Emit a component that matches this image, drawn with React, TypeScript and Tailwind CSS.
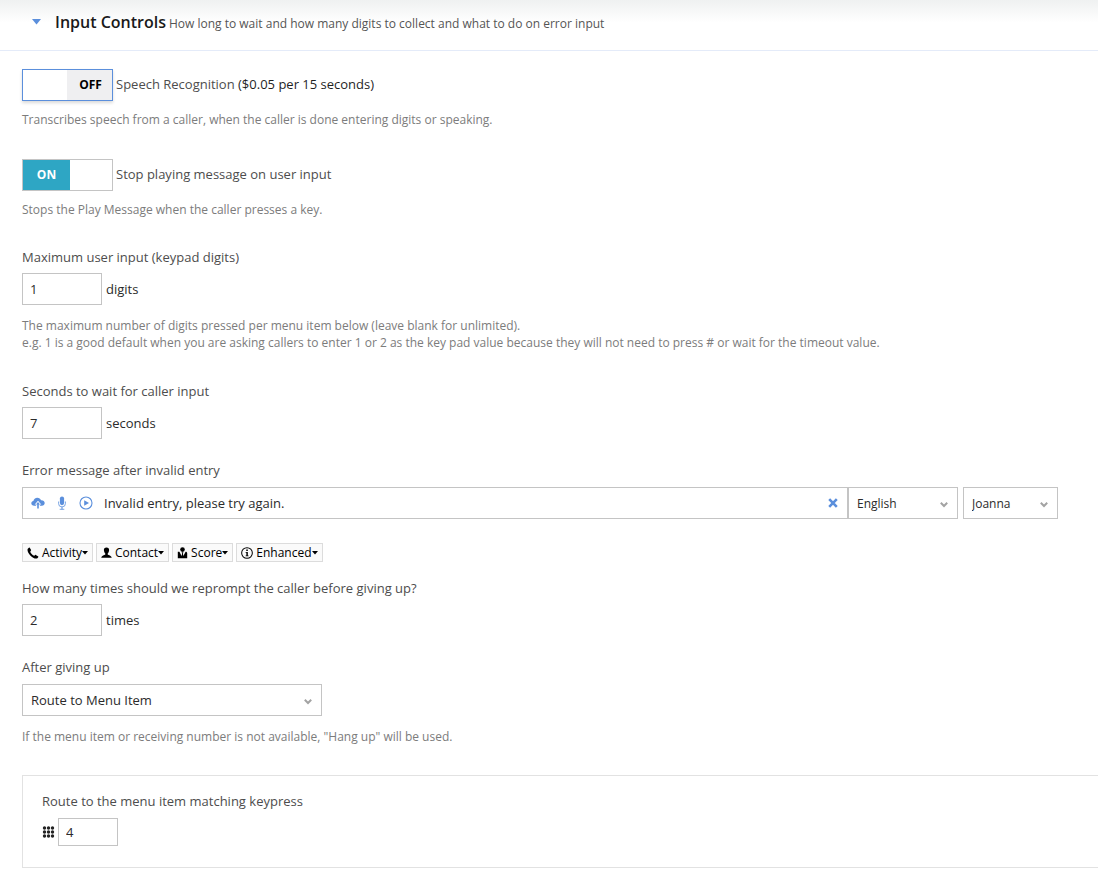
import { useState } from 'react';
import type { ReactNode } from 'react';

function HelpText({ className = 'mt-3', children }: { className?: string; children: ReactNode }) {
  return <p className={`text-[12px] leading-[17px] text-[#7c7c7c] ${className}`}>{children}</p>;
}

function Toggle({ id, defaultOn = false, children }: { id: string; defaultOn?: boolean; children: ReactNode }) {
  const [on, setOn] = useState(defaultOn);

  return (
    <div className="flex items-center gap-[3px]">
      <button
        id={id}
        type="button"
        role="switch"
        aria-checked={on}
        onClick={() => setOn(!on)}
        className={
          on
            ? 'flex h-8 w-[91px] border border-[#c4c4c4] bg-white text-[12px] font-bold'
            : 'flex h-8 w-[91px] justify-end border border-[#5b8fdc] bg-white text-[12px] font-bold shadow-[0_2px_3px_rgba(0,0,0,0.15)]'
        }
      >
        {on ? (
          <span className="flex h-full w-[47px] items-center justify-center bg-[#2ea6c4] text-white">ON</span>
        ) : (
          <span className="flex h-full w-[45px] items-center justify-center bg-[#efeff1] pl-[2px] text-black">OFF</span>
        )}
      </button>
      <label htmlFor={id} className="pb-[2px] leading-[18px] text-[#4d4d4d]">
        {children}
      </label>
    </div>
  );
}

function NumberField({ id, label, value, unit }: { id: string; label: string; value: string; unit: string }) {
  return (
    <div>
      <label htmlFor={id} className="block leading-[18px] text-[#4d4d4d]">
        {label}
      </label>
      <div className="mt-[7px] flex items-center gap-1">
        <input id={id} type="text" defaultValue={value} className="h-8 w-20 border border-[#c4c4c4] bg-white px-[7px] text-[#2b2b2b]" />
        <span className="leading-[18px] text-[#2b2b2b]">{unit}</span>
      </div>
    </div>
  );
}

function Select({ id, label, options, className, textClassName = '' }: { id: string; label?: string; options: string[]; className: string; textClassName?: string }) {
  return (
    <div className={`relative ${className}`}>
      <select
        id={id}
        aria-label={label}
        className={`h-8 w-full appearance-none border border-[#c4c4c4] bg-white pl-2 pr-6 pt-[2px] text-[#2b2b2b] ${textClassName}`}
      >
        {options.map((option) => (
          <option key={option}>{option}</option>
        ))}
      </select>
      <svg viewBox="0 0 8 6" className="pointer-events-none absolute right-[10px] top-[15px] h-[6px] w-[8px]" fill="none" stroke="#a3a3a3" strokeWidth="2">
        <path d="M0.8 0.8 4 4 7.2 0.8" />
      </svg>
    </div>
  );
}

function UploadIcon() {
  return (
    <svg viewBox="0 0 14 12" className="h-[12px] w-[14px]">
      <path
        fill="#5b8fdc"
        d="M3.2 8.8C1.4 8.8 0.3 7.7 0.3 6.3 0.3 5 1.2 4.1 2.4 3.9 2.7 2 4.3 0.7 6.3 0.7 8.1 0.7 9.5 1.7 10 3.2 12.1 3 13.7 4.3 13.7 6.1 13.7 7.7 12.5 8.8 10.9 8.8Z"
      />
      <path fill="#fff" d="M7 3.7 10.3 7.6H8.9V9H5.1V7.6H3.7Z" />
      <path fill="#5b8fdc" d="M7 5 9 7.4H7.8V11.4H6.2V7.4H5Z" />
    </svg>
  );
}

function MicIcon() {
  return (
    <svg viewBox="0 0 8 14" className="h-[14px] w-[8px]" fill="none" stroke="#5b8fdc">
      <rect x="1.9" y="0.5" width="4.2" height="8.7" rx="2.1" fill="#5b8fdc" stroke="none" />
      <path strokeWidth="0.8" d="M0.6 5.5v2.2a3.4 3.2 0 0 0 6.8 0V5.5M1.7 13.3h4.6" />
      <path d="M4 11v2.4" />
    </svg>
  );
}

function PlayIcon() {
  return (
    <svg viewBox="0 0 14 14" className="h-[14px] w-[14px]">
      <circle cx="7" cy="7" r="6" fill="none" stroke="#5b8fdc" strokeWidth="1.1" />
      <path d="M5.2 4.2 10 7 5.2 9.8Z" fill="#5b8fdc" />
    </svg>
  );
}

const tokens = [
  {
    label: 'Activity',
    icon: (
      <svg viewBox="0 0 12 12" className="h-[12px] w-[12px]">
        <path d="M2.6 0.5 4.1 3.1C4.3 3.5 3.4 4.3 3.3 4.7 3.3 5.8 6 8.6 7.2 8.7 7.7 8.6 8.4 7.7 8.8 7.9L11.3 9.4C11.7 9.8 10.7 11.2 9.7 11.5 5.9 12 0.2 6.2 0.5 2.4 0.8 1.3 2.2 0.1 2.6 0.5Z" />
      </svg>
    ),
  },
  {
    label: 'Contact',
    icon: (
      <svg viewBox="0 0 11 12" className="h-[12px] w-[11px]">
        <path d="M5.5 0.6C7.3 0.6 8.2 1.7 8.1 3.3 8 4.9 7.3 6 6.7 6.6V7.6C7.5 8.4 10.5 8.6 10.7 10.8H0.3C0.5 8.6 3.5 8.4 4.3 7.6V6.6C3.7 6 3 4.9 2.9 3.3 2.8 1.7 3.7 0.6 5.5 0.6Z" />
      </svg>
    ),
  },
  {
    label: 'Score',
    icon: (
      <svg viewBox="0 0 11 12" className="h-[12px] w-[11px]">
        <circle cx="5.5" cy="2.6" r="2.3" />
        <path d="M0.8 4.8H2.4L4.6 8.9 5.1 6.6 4.6 5.3H6.4L5.9 6.6 6.4 8.9 8.6 4.8C9.7 4.8 10.2 5.4 10.2 6.3V11.2H0.8Z" />
      </svg>
    ),
  },
  {
    label: 'Enhanced',
    icon: (
      <svg viewBox="0 0 13 13" className="h-[12px] w-[12px]">
        <circle cx="6.5" cy="6.5" r="5.8" fill="none" stroke="#000" strokeWidth="1.1" />
        <path d="M5.7 2.7h1.7v1.6H5.7zM5 5.3h2.4v3.9h0.8v0.9H5v-0.9h0.8V6.2H5z" />
      </svg>
    ),
  },
];

export default function App() {
  const [message, setMessage] = useState('Invalid entry, please try again.');

  return (
    <main className="min-h-screen bg-white pb-[10px] font-['Open_Sans',sans-serif] text-[13px] text-[#2b2b2b]">
      <header className="flex h-[51px] items-center border-b border-[#e4ebf9] bg-linear-to-b from-[#eff1f1] to-white to-45% pb-[6px] pl-8">
        <button type="button" aria-label="Collapse Input Controls" className="mr-[14px]">
          <svg viewBox="0 0 9 6" className="h-[6px] w-[9px]">
            <path d="M0 0h9L4.5 5.5Z" fill="#5b8fdc" />
          </svg>
        </button>
        <div className="flex items-baseline gap-[3px]">
          <h2 className="text-[16px] font-semibold text-[#1a1a1a]">Input Controls</h2>
          <p className="text-[12px] text-[#555]">How long to wait and how many digits to collect and what to do on error input</p>
        </div>
      </header>

      <div className="pl-[22px] pt-[18px]">
        <div>
          <Toggle id="speech">
            Speech Recognition <span className="text-[#1f1f1f]">($0.05 per 15 seconds)</span>
          </Toggle>
          <HelpText className="mt-[10px]">Transcribes speech from a caller, when the caller is done entering digits or speaking.</HelpText>
        </div>

        <div className="mt-[31px]">
          <Toggle id="stop-playing" defaultOn>
            Stop playing message on user input
          </Toggle>
          <HelpText className="mt-[10px]">Stops the Play Message when the caller presses a key.</HelpText>
        </div>

        <div className="mt-[30px]">
          <NumberField id="max-input" label="Maximum user input (keypad digits)" value="1" unit="digits" />
          <HelpText>
            The maximum number of digits pressed per menu item below (leave blank for unlimited).
            <br />
            e.g. 1 is a good default when you are asking callers to enter 1 or 2 as the key pad value because they will not need to press # or wait for the timeout value.
          </HelpText>
        </div>

        <div className="mt-[31px]">
          <NumberField id="wait" label="Seconds to wait for caller input" value="7" unit="seconds" />
        </div>

        <div className="mt-[22px]">
          <label htmlFor="error-message" className="block leading-[18px] text-[#4d4d4d]">
            Error message after invalid entry
          </label>
          <div className="mr-10 mt-2 flex">
            <div className="flex h-8 flex-1 items-center border border-[#c4c4c4] pl-2 pr-[9px]">
              <button type="button" aria-label="Upload audio">
                <UploadIcon />
              </button>
              <button type="button" aria-label="Record audio" className="ml-[13px]">
                <MicIcon />
              </button>
              <button type="button" aria-label="Play message" className="ml-[13px]">
                <PlayIcon />
              </button>
              <input
                id="error-message"
                type="text"
                value={message}
                onChange={(e) => setMessage(e.target.value)}
                className="ml-[11px] h-full min-w-0 flex-1 text-[#2b2b2b] outline-none"
              />
              <button type="button" aria-label="Clear message" onClick={() => setMessage('')}>
                <svg viewBox="0 0 10 10" className="h-[10px] w-[10px]" stroke="#5b8fdc" strokeWidth="2.6">
                  <path d="M1.2 1.2 8.8 8.8M8.8 1.2 1.2 8.8" />
                </svg>
              </button>
            </div>
            <Select id="language" label="Language" options={['English', 'Spanish', 'French']} className="w-[110px]" textClassName="text-[12px]" />
            <Select id="voice" label="Voice" options={['Joanna', 'Matthew', 'Ivy']} className="ml-[5px] w-[95px]" textClassName="text-[12px]" />
          </div>
        </div>

        <div className="mt-6 flex gap-[3px]">
          {tokens.map((token) => (
            <button key={token.label} type="button" className="flex h-[19px] items-center border border-[#dcdcdc] bg-[#fafafa] px-1 text-[12px] text-black">
              {token.icon}
              <span className="ml-[3px]">{token.label}</span>
              <svg viewBox="0 0 6 4" className="h-[4px] w-[6px]">
                <path d="M0 0h6L3 3.6Z" />
              </svg>
            </button>
          ))}
        </div>

        <div className="mt-[17px]">
          <NumberField id="reprompt" label="How many times should we reprompt the caller before giving up?" value="2" unit="times" />
        </div>

        <div className="mt-[22px]">
          <label htmlFor="giving-up" className="mb-2 block leading-[18px] text-[#4d4d4d]">
            After giving up
          </label>
          <Select id="giving-up" options={['Route to Menu Item', 'Hang up']} className="w-[300px]" />
          <HelpText>If the menu item or receiving number is not available, "Hang up" will be used.</HelpText>
        </div>

        <section className="mt-[30px] border-y border-l border-[#e2e2e2] pb-[21px] pl-[19px] pt-4">
          <label htmlFor="keypress" className="block leading-[18px] text-[#4d4d4d]">
            Route to the menu item matching keypress
          </label>
          <div className="mt-2 flex items-center gap-[3px]">
            <svg viewBox="0 0 13 13" className="h-[13px] w-[13px]" fill="#222">
              {[2, 6, 10].map((y) => [2.5, 6.5, 10.5].map((x) => <circle key={`${x}-${y}`} cx={x} cy={y} r="1.7" />))}
            </svg>
            <input id="keypress" type="text" defaultValue="4" className="h-7 w-[60px] border border-[#c4c4c4] bg-white px-[7px] text-[#2b2b2b]" />
          </div>
        </section>
      </div>
    </main>
  );
}
